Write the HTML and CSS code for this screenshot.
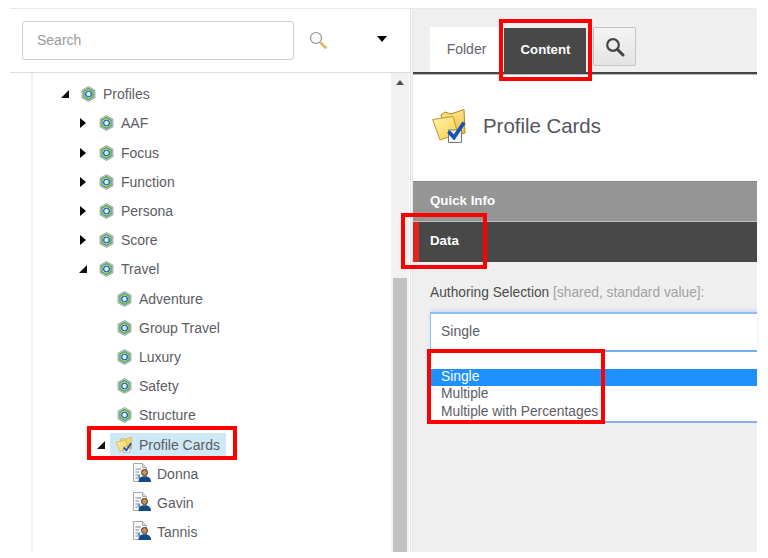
FILE: index.html
```html
<!DOCTYPE html>
<html lang="en">
<head>
<meta charset="utf-8">
<title>Profile Cards</title>
<link rel="stylesheet" href="styles.css">
</head>
<body>
<svg class="defs" width="0" height="0" aria-hidden="true">
  <defs>
    <linearGradient id="foldfront" x1="0" y1="0" x2="1" y2="1">
      <stop offset="0" stop-color="#fff3b0"/>
      <stop offset="1" stop-color="#f8cf45"/>
    </linearGradient>
    <linearGradient id="foldback" x1="0" y1="0" x2="0" y2="1">
      <stop offset="0" stop-color="#fbe38a"/>
      <stop offset="1" stop-color="#eebb2e"/>
    </linearGradient>
  </defs>
  <symbol id="hex" viewBox="0 0 16 16">
    <path d="M8.500 .5 15 4.200V11.800L8.500 15.500 2 11.800V4.200Z" fill="#c2cad0" stroke="#8f99a2" stroke-width=".8"/>
    <path d="M8.500 2.600 13 5.200V10.800L8.500 13.400 4 10.800V5.200Z" fill="#e9f2e6" stroke="#4fae40" stroke-width="1.400"/>
    <circle cx="8.500" cy="8" r="2.900" fill="#dfeaf5" stroke="#2a68b4" stroke-width="1.400"/>
  </symbol>
  <symbol id="folder" viewBox="0 0 34 34">
    <path d="M9 6 13 3 19 5 32 .5 33 24 13 29Z" fill="url(#foldback)" stroke="#b4851c" stroke-width="1"/>
    <path d="M.7 10.500 21 7.500 26 25 8 31Z" fill="url(#foldfront)" stroke="#c4952a" stroke-width="1"/>
    <path d="M16.500 21H29.500V33.500H16.500Z" fill="#f5f5f5" stroke="#777" stroke-width="1"/>
    <path d="M16.500 22.500 22 28.500 32 13.500" fill="none" stroke="#1552b5" stroke-width="3.800"/>
  </symbol>
  <symbol id="person" viewBox="0 0 18 19">
    <path d="M.5 .5H9.500L13.500 4.500V18.500H.5Z" fill="#f8f8f8" stroke="#a4aaaf" stroke-width="1"/>
    <path d="M9.500 .5V4.500H13.500" fill="#dcdfe2" stroke="#a4aaaf" stroke-width="1"/>
    <path d="M2.500 6H8M2.500 9H6M2.500 12H6M2.500 15H6" stroke="#7f8b96" stroke-width="1.100"/>
    <path d="M7 11 4.500 13.500 7 16Z" fill="#4f8fcb"/>
    <circle cx="11.500" cy="9.500" r="3" fill="#c4935c" stroke="#4a3218" stroke-width="1"/>
    <path d="M5.500 19C5.500 14.800 8 13.300 11.500 13.300S18 14.800 18 19Z" fill="#124a88"/>
  </symbol>
</svg>

<div class="page">
  <section class="left">
    <header class="searchbar">
      <div class="searchbox">Search</div>
      <svg class="lens" viewBox="0 0 18 18" width="18" height="18" aria-hidden="true">
        <circle cx="7" cy="7" r="5.500" fill="#fbfbfb" stroke="#8b8b8b" stroke-width="1.100"/>
        <path d="M11.500 11.500 16.500 16.500" stroke="#e9b15c" stroke-width="2.600" stroke-linecap="round"/>
      </svg>
      <span class="caret"></span>
    </header>
    <div class="treewrap">
      <div class="spine"></div>
      <ul class="tree">
        <li class="row d1"><span class="arrow open"></span><svg class="ico"><use href="#hex"/></svg><span class="lbl">Profiles</span></li>
        <li class="row d2"><span class="arrow closed"></span><svg class="ico"><use href="#hex"/></svg><span class="lbl">AAF</span></li>
        <li class="row d2"><span class="arrow closed"></span><svg class="ico"><use href="#hex"/></svg><span class="lbl">Focus</span></li>
        <li class="row d2"><span class="arrow closed"></span><svg class="ico"><use href="#hex"/></svg><span class="lbl">Function</span></li>
        <li class="row d2"><span class="arrow closed"></span><svg class="ico"><use href="#hex"/></svg><span class="lbl">Persona</span></li>
        <li class="row d2"><span class="arrow closed"></span><svg class="ico"><use href="#hex"/></svg><span class="lbl">Score</span></li>
        <li class="row d2"><span class="arrow open"></span><svg class="ico"><use href="#hex"/></svg><span class="lbl">Travel</span></li>
        <li class="row d3"><span class="arrow none"></span><svg class="ico"><use href="#hex"/></svg><span class="lbl">Adventure</span></li>
        <li class="row d3"><span class="arrow none"></span><svg class="ico"><use href="#hex"/></svg><span class="lbl">Group Travel</span></li>
        <li class="row d3"><span class="arrow none"></span><svg class="ico"><use href="#hex"/></svg><span class="lbl">Luxury</span></li>
        <li class="row d3"><span class="arrow none"></span><svg class="ico"><use href="#hex"/></svg><span class="lbl">Safety</span></li>
        <li class="row d3"><span class="arrow none"></span><svg class="ico"><use href="#hex"/></svg><span class="lbl">Structure</span></li>
        <li class="row d3 marked"><span class="arrow open"></span><span class="selected"><svg class="ico"><use href="#folder"/></svg><span class="lbl">Profile Cards</span></span></li>
        <li class="row d4"><span class="arrow none"></span><svg class="ico ico-person"><use href="#person"/></svg><span class="lbl">Donna</span></li>
        <li class="row d4"><span class="arrow none"></span><svg class="ico ico-person"><use href="#person"/></svg><span class="lbl">Gavin</span></li>
        <li class="row d4"><span class="arrow none"></span><svg class="ico ico-person"><use href="#person"/></svg><span class="lbl">Tannis</span></li>
      </ul>
      <div class="scrollbar"><span class="scrollup"></span><div class="thumb"></div></div>
    </div>
  </section>

  <div class="divider"></div>

  <section class="right">
    <nav class="tabs">
      <div class="tab tab-folder">Folder</div>
      <div class="tab tab-active">Content<span class="mark mark-content"></span></div>
      <div class="tabsearch">
        <svg viewBox="0 0 20 20" width="20" height="20" aria-hidden="true">
          <circle cx="8" cy="8" r="5.800" fill="none" stroke="#444" stroke-width="2.200"/>
          <path d="M12.500 12.500 18 18" stroke="#444" stroke-width="3" stroke-linecap="round"/>
        </svg>
      </div>
    </nav>
    <div class="titlearea">
      <svg class="titleicon"><use href="#folder"/></svg>
      <h1 class="title">Profile Cards</h1>
    </div>
    <div class="bar bar-quick">Quick Info</div>
    <div class="bar bar-data">Data<span class="mark mark-data"></span></div>
    <div class="field">
      <div class="fieldlabel">Authoring Selection <span class="muted">[shared, standard value]:</span></div>
      <div class="input">Single</div>
      <ul class="listbox">
        <li class="opt opt-on">Single</li>
        <li class="opt">Multiple</li>
        <li class="opt">Multiple with Percentages</li>
        <li class="mark mark-opts"></li>
      </ul>
    </div>
  </section>
</div>
</body>
</html>
```

FILE: styles.css
```css
* { box-sizing: border-box; }
html, body { margin: 0; height: 100%; background: #fff; overflow: hidden; }
body { font-family: "Liberation Sans", Arial, sans-serif; font-size: 14px; color: #5c5c64; }
ul { margin: 0; padding: 0; list-style: none; }
.defs { display: block; height: 0; }

.page {
  display: grid;
  grid-template-columns: 400px 3px 344px;
  width: 747px;
  height: 544px;
  margin: 8px 0 0 10px;
  border-top: 1px solid #e9e9e9;
}

/* left column */
.left { display: flex; flex-direction: column; min-height: 0; }
.searchbar {
  display: flex;
  align-items: center;
  flex: 0 0 64px;
  padding: 0 0 0 12px;
  border-bottom: 1px solid #dcdcdc;
}
.searchbox {
  display: flex;
  align-items: center;
  width: 272px;
  height: 39px;
  padding: 0 0 2px 14px;
  border: 1px solid #cfcfcf;
  border-radius: 3px;
  color: #9a9a9a;
}
.lens { margin: 0 0 1px 15px; }
.caret {
  width: 0;
  height: 0;
  margin: 0 0 3px 50px;
  border-style: solid;
  border-width: 6px 5.500px 0;
  border-color: #000 transparent transparent;
}

.treewrap { display: flex; flex: 1; min-height: 0; }
.spine { flex: 0 0 2px; margin-left: 21px; background: #efefef; }
.tree { flex: 1; padding-top: 6.700px; }
.row { display: flex; align-items: center; height: 29.200px; }
.d1 { padding-left: 25px; }
.d2 { padding-left: 43px; }
.d3 { padding-left: 61px; }
.d4 { padding-left: 79px; }
.arrow { flex: 0 0 14px; height: 10px; margin-right: 8px; display: flex; justify-content: center; align-items: center; }
.arrow.closed::before {
  content: "";
  border-style: solid;
  border-width: 5.500px 0 5.500px 6px;
  border-color: transparent transparent transparent #000;
}
.arrow.open::before {
  content: "";
  border-style: solid;
  border-width: 0 0 8px 8px;
  border-color: transparent transparent #111 transparent;
}
.ico { flex: 0 0 16px; width: 16px; height: 16px; margin-right: 7px; }
.ico-person { flex-basis: 18px; width: 18px; height: 19px; margin: 0 6px 3px -1px; }
.selected {
  display: flex;
  align-items: center;
  height: 24px;
  margin-left: -6px;
  padding: 0 6px;
  background: #cfe8f5;
}
.marked { position: relative; }
.marked::after {
  content: "";
  box-sizing: border-box;
  position: absolute;
  left: 54px;
  top: -3.500px;
  width: 150px;
  height: 34px;
  border: 4px solid #f00;
  pointer-events: none;
}

.scrollbar {
  flex: 0 0 19px;
  display: flex;
  flex-direction: column;
  padding: 0 2px;
  background: #f1f1f1;
  border-right: 1px solid #fff;
}
.scrollup {
  align-self: center;
  width: 0;
  height: 0;
  margin-top: 7px;
  border-style: solid;
  border-width: 0 4px 5px;
  border-color: transparent transparent #505050;
}
.thumb { margin-top: 193px; flex: 1; background: #c1c1c1; }

.divider { border-left: 1px solid #e2e2e2; border-right: 1px solid #e8e8e8; background: #f8f8f8; }

/* right column */
.right { display: flex; flex-direction: column; background: #efefef; min-height: 0; }
.tabs {
  display: flex;
  align-items: flex-end;
  flex: 0 0 65px;
  padding-left: 17px;
  border-bottom: 2px solid #444;
}
.tab { position: relative; display: flex; align-items: center; justify-content: center; }
.tab-folder { width: 70px; height: 45px; background: #fff; padding: 0 0 1px 3px; color: #66666e; }
.tab-active {
  width: 82px;
  height: 44px;
  margin-left: 4px;
  padding: 0 0 2px 1px;
  background: #484848;
  color: #fff;
  font-size: 13.200px;
  font-weight: bold;
}
.tabsearch {
  display: flex;
  align-items: center;
  justify-content: center;
  width: 43px;
  height: 39px;
  margin: 0 0 6px 7px;
  border: 1px solid #c4c4c4;
  border-radius: 2px;
  background: linear-gradient(#f4f4f4, #e4e4e4);
}
.titlearea {
  display: flex;
  align-items: center;
  flex: 0 0 107px;
  padding: 0 0 4px 19px;
  border-top: 1px solid #bbb;
  background: #fff;
}
.titleicon { width: 34px; height: 34px; margin-right: 17px; }
.title { margin: 0; font-size: 20.400px; font-weight: normal; color: #55555d; }
.bar {
  position: relative;
  display: flex;
  align-items: center;
  padding: 0 0 3px 17px;
  color: #fff;
  font-size: 13.300px;
  font-weight: bold;
}
.bar-quick { flex: 0 0 41px; border-top: 1px solid #888; border-bottom: 1px solid #bdbdbd; background: #959595; }
.bar-data { flex: 0 0 40px; background: #484848; box-shadow: inset 6px 0 0 #e0261c; }

.field { position: relative; flex: 1; padding: 22px 0 0 17px; }
.fieldlabel { color: #4c4c4c; font-size: 13.750px; line-height: 18px; }
.muted { color: #a2a2a2; }
.input {
  display: flex;
  align-items: center;
  height: 40px;
  margin: 10px 0 0 0;
  padding: 0 0 2px 10px;
  border: solid #8cc1f0;
  border-width: 2px 0 2px 1px;
  border-bottom-color: #6fb0ec;
  box-shadow: 0 -2px 3px rgba(140, 193, 240, .35);
  background: #fff;
}
.listbox {
  position: relative;
  height: 71px;
  padding-top: 17px;
  border-bottom: 2px solid #8aaee6;
  border-left: 1px solid #b8d4f0;
  background: #fff;
  font-size: 13.800px;
}
.opt { height: 17.500px; padding-left: 10px; line-height: 16px; }
.opt-on { height: 17px; background: #1e90ff; color: #fff; }

/* red annotation frames */
.mark { position: absolute; border: 4px solid #f00; pointer-events: none; }
.mark-content { left: -5px; top: -9px; width: 93px; height: 62px; }
.mark-data { left: -12px; top: -9px; width: 86px; height: 56px; }
.mark-opts { left: -4px; top: -3px; width: 178px; height: 75px; }
```
